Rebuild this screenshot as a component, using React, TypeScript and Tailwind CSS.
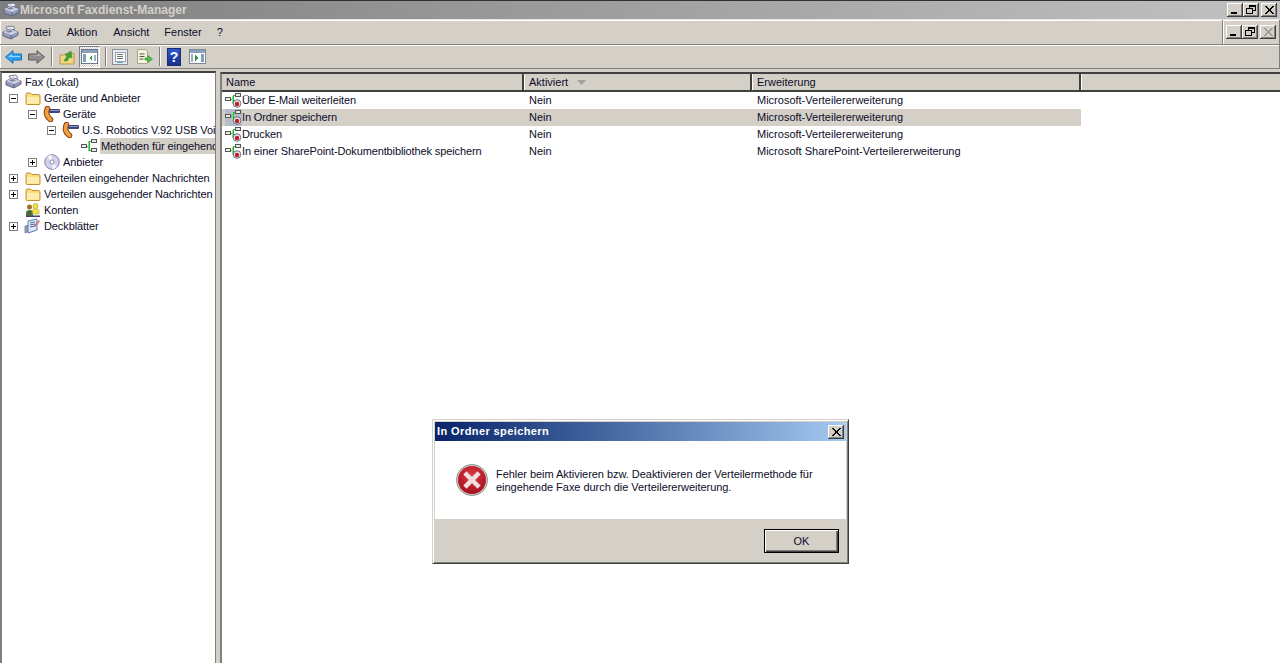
const bevel = "shadow-[inset_-1px_-1px_0_#404040,inset_1px_1px_0_#ffffff,inset_-2px_-2px_0_#808080]";

function CaptionBtn({ kind, disabled }: { kind: "min" | "restore" | "close"; disabled?: boolean }) {
  const c = disabled ? "#9a9890" : "#000";
  return (
    <div className={`w-[16px] h-[14px] bg-[#d4d0c8] flex items-center justify-center ${bevel}`}>
      <svg width="12" height="10" viewBox="0 0 12 10" shapeRendering="crispEdges">
        {kind === "min" && <rect x="2" y="7" width="6" height="2" fill={c} />}
        {kind === "restore" && (
          <path d="M4.5 3V.5h6v5H8M1.5 3.5h6v5h-6z M1 3.5h7M4 1h7" fill="none" stroke={c} />
        )}
        {kind === "close" && (
          <path d="M2 1l8 8M3 1l8 8M10 1l-8 8M11 1l-8 8" fill="none" stroke={c} strokeWidth="1" shapeRendering="auto" />
        )}
      </svg>
    </div>
  );
}

function FaxIcon() {
  return (
    <svg width="17" height="16" viewBox="0 0 17 16" className="shrink-0">
      <path d="M4 2l7-1 2 3-7 2z" fill="#eef0f6" stroke="#6d7290" strokeWidth=".9" />
      <path d="M1 7l7-3 8 3v3l-7 4-8-3z" fill="#9298b8" stroke="#5a5f80" strokeWidth=".9" />
      <path d="M1 7l8 3 7-3-8-3z" fill="#cdd0e2" />
      <path d="M9 10v4" stroke="#5a5f80" strokeWidth=".9" />
      <path d="M4 6.500l4-1.500 3 1.200-4 1.500z" fill="#7d82a0" />
    </svg>
  );
}

function Folder() {
  return (
    <svg width="16" height="15" viewBox="0 0 16 15" className="shrink-0">
      <path d="M1 3.500q0-1.500 1.500-1.500h3l1.500 1.500h6.500q1.500 0 1.500 1.500v7.500q0 1-1 1h-11.500q-1.500 0-1.500-1z" fill="#fbdc78" stroke="#bd8f35" strokeWidth="1" />
      <path d="M2 6h12v6.500h-12z" fill="#fdeeb0" />
    </svg>
  );
}

function PhoneIcon() {
  return (
    <svg width="17" height="16" viewBox="0 0 17 16" className="shrink-0">
      <path d="M4.500 2.500Q1.500 9 7.500 13.500" fill="none" stroke="#8a4310" strokeWidth="5.500" strokeLinecap="round" />
      <path d="M4.500 2.500Q1.500 9 7.500 13.500" fill="none" stroke="#f0a040" strokeWidth="3.500" strokeLinecap="round" />
      <rect x="6" y="3" width="11" height="4" rx="1" fill="#3f4478" />
      <rect x="7" y="4" width="9" height="1" fill="#9196c0" />
    </svg>
  );
}

function Branch({ overlay }: { overlay?: boolean }) {
  return (
    <svg width="17" height="16" viewBox="0 0 17 16" className="shrink-0" shapeRendering="crispEdges">
      <rect x="0.500" y={overlay ? 4.5 : 6.5} width="5" height="3" fill="#e8ece4" stroke="#555" />
      <path d={overlay ? "M6 6h2M8.500 2v9M8 2.500h2" : "M6 8h2M8.500 3v10M8 3.500h2M8 12.500h2"} stroke="#22b52e" fill="none" />
      <path d={overlay ? "M7.500 6v-3M7.500 6v5" : "M7.500 3v10"} stroke="#7fe085" fill="none" />
      <rect x="10.500" y={overlay ? 0.5 : 1.5} width="5" height="3" fill="#e8ece4" stroke="#555" />
      {!overlay && <rect x="10.500" y="10.500" width="5" height="3" fill="#e8ece4" stroke="#555" />}
      {overlay && (
        <g shapeRendering="auto">
          <circle cx="12" cy="10.500" r="3.800" fill="#e3e5ec" stroke="#5f6378" strokeWidth=".9" />
          <circle cx="12" cy="11" r="2.200" fill="#c41c26" />
        </g>
      )}
    </svg>
  );
}

function Disc() {
  return (
    <svg width="16" height="16" viewBox="0 0 16 16" className="shrink-0">
      <circle cx="8" cy="8" r="7.300" fill="#d2d2ee" stroke="#7c7c9c" strokeWidth=".9" />
      <path d="M8 8L3 3a7 7 0 0 1 5-2z" fill="#f4f4ff" />
      <path d="M8 8l5 5a7 7 0 0 1-5 2z" fill="#f0f0ff" />
      <circle cx="8" cy="8" r="2" fill="#fff" stroke="#7c7c9c" strokeWidth=".8" />
    </svg>
  );
}

function Accounts() {
  return (
    <svg width="16" height="16" viewBox="0 0 16 16" className="shrink-0">
      <circle cx="4.500" cy="5" r="2.500" fill="#a5702c" />
      <circle cx="10.500" cy="4" r="2.500" fill="#f3e04a" stroke="#a89a20" strokeWidth=".6" />
      <path d="M1 14v-3q0-3 3.500-3t3.500 3v3z" fill="#2f8a3c" />
      <path d="M7.500 12v-3.500q0-2 3-2t3.500 2v3.500z" fill="#efe04a" stroke="#a89a20" strokeWidth=".5" />
      <path d="M1 13.500h14v1.500h-14z" fill="#3f4478" />
      <path d="M3 9l3 4M6 9l-3 4" stroke="#b02828" strokeWidth="1" />
    </svg>
  );
}

function CoverIcon() {
  return (
    <svg width="17" height="16" viewBox="0 0 17 16" className="shrink-0">
      <path d="M1 8l4-1v6l-4 2z" fill="#9aa0b8" stroke="#666b85" strokeWidth=".7" />
      <path d="M4 3l9-2v11l-9 3z" fill="#dfe7f6" stroke="#4a6fb0" strokeWidth=".9" />
      <path d="M6 5l5-1M6 7l5-1M6 9l5-1" stroke="#3c5fa8" strokeWidth=".9" />
      <path d="M10 8l5-6 1 1-5 6z" fill="#e25a5a" />
    </svg>
  );
}

function Expander({ open }: { open?: boolean }) {
  return (
    <div className="w-[9px] h-[9px] border border-[#808080] bg-white relative shrink-0">
      <div className="absolute left-[1px] top-[3px] w-[5px] h-[1px] bg-black" />
      {!open && <div className="absolute left-[3px] top-[1px] w-[1px] h-[5px] bg-black" />}
    </div>
  );
}

function Sep() {
  return <div className="w-[2px] h-[19px] bg-[#808080] border-r border-white" />;
}

function ToolbarIcons() {
  return (
    <div className="flex items-center h-full pl-[5px]">
      <svg width="17" height="14" viewBox="0 0 17 14">
        <path d="M.5 7L8 .7v3.300h8.500v6H8v3.300z" fill="#2aa2f0" stroke="#1d6fb8" />
        <path d="M3 7l4-3v2h8v1H6z" fill="#93dcfc" />
      </svg>
      <svg width="17" height="14" viewBox="0 0 17 14" className="ml-[6px]">
        <path d="M16.500 7L9 .7v3.300H.5v6H9v3.300z" fill="#8f8f8f" stroke="#5c5c5c" />
        <path d="M2 5h8V3l3 3z" fill="#bcbcbc" />
      </svg>
      <div className="ml-[6px]"><Sep /></div>
      <svg width="16" height="16" viewBox="0 0 16 16" className="ml-[6px]">
        <path d="M1 6h4l1.500-1.500h8.500v10.500h-14z" fill="#f2d77f" stroke="#b8974a" />
        <path d="M5 12l3-5-2-1 6-4 1 7-2-1-3 4z" fill="#3fa53a" stroke="#2a7d2a" strokeWidth=".5" />
      </svg>
      <div className="ml-[4px] w-[21px] h-[22px] bg-[repeating-conic-gradient(#ffffff_0_25%,#d4d0c8_0_50%)] bg-[length:2px_2px] border border-t-[#808080] border-l-[#808080] border-r-white border-b-white flex items-center justify-center">
        <svg width="17" height="15" viewBox="0 0 17 15" shapeRendering="crispEdges">
          <rect x=".5" y=".5" width="16" height="14" fill="#fff" stroke="#6a7a92" />
          <rect x="1" y="1" width="15" height="3" fill="#8da0b8" />
          <rect x="2" y="5" width="3" height="8" fill="#7fa0bc" />
          <path d="M11 6v6L8 9z" fill="#2f9a3a" />
          <rect x="13" y="6" width="2" height="6" fill="#9ab0c4" />
        </svg>
      </div>
      <div className="ml-[5px]"><Sep /></div>
      <svg width="16" height="16" viewBox="0 0 16 16" className="ml-[5px]" shapeRendering="crispEdges">
        <rect x=".5" y=".5" width="15" height="15" fill="#e8ecf0" stroke="#8a9098" />
        <rect x="3" y="3" width="10" height="9" fill="#fff" stroke="#9aa0a8" />
        <path d="M5 5h6M5 7h6M5 9h6" stroke="#6a7480" />
        <rect x="5" y="13" width="6" height="1" fill="#48b0d0" />
      </svg>
      <svg width="17" height="16" viewBox="0 0 17 16" className="ml-[8px]">
        <path d="M1.500.5h8l2 2v12h-10z" fill="#f6f3dc" stroke="#a8a48c" />
        <path d="M3.500 5h5M3.500 7.500h5M3.500 10h4" stroke="#555" />
        <path d="M9 9h3V6.500l4.500 3.500-4.500 3.500V11H9z" fill="#4cc04c" stroke="#2a8a2a" strokeWidth=".6" />
      </svg>
      <div className="ml-[6px]"><Sep /></div>
      <div className="ml-[6px] w-[14px] h-[18px] bg-gradient-to-b from-[#2a56d0] to-[#1c2f8c] border border-[#1a2a70] flex items-center justify-center text-white text-[14px] font-bold leading-none">?</div>
      <svg width="17" height="15" viewBox="0 0 17 15" className="ml-[8px]" shapeRendering="crispEdges">
        <rect x=".5" y=".5" width="16" height="14" fill="#fff" stroke="#7a8a9a" />
        <rect x="1" y="1" width="15" height="3" fill="#8da0b8" />
        <rect x="2" y="5" width="2" height="8" fill="#9ab0c4" />
        <path d="M6 6v6l4-3z" fill="#2f9a3a" />
        <rect x="12" y="5" width="3" height="8" fill="#7fa0bc" />
      </svg>
    </div>
  );
}

function TreeRow({ indent, exp, noSlot, icon, children, selected }: { indent: number; exp?: "open" | "closed"; noSlot?: boolean; icon: React.ReactNode; children: React.ReactNode; selected?: boolean }) {
  return (
    <div className="h-[16px] flex items-center relative" style={{ paddingLeft: indent }}>
      {!noSlot && (
        <div className="w-[9px] mr-[6px] flex items-center shrink-0">{exp && <Expander open={exp === "open"} />}</div>
      )}
      <div className="w-[17px] flex items-center justify-center shrink-0">{icon}</div>
      <span className={`ml-[2px] px-[1px] whitespace-nowrap leading-[16px] tracking-[-0.1px] ${selected ? "bg-[#d4d0c8] w-[200px]" : ""}`}>{children}</span>
    </div>
  );
}

const rows = [
  { name: "Über E-Mail weiterleiten", status: "Nein", ext: "Microsoft-Verteilererweiterung" },
  { name: "In Ordner speichern", status: "Nein", ext: "Microsoft-Verteilererweiterung", selected: true },
  { name: "Drucken", status: "Nein", ext: "Microsoft-Verteilererweiterung" },
  { name: "In einer SharePoint-Dokumentbibliothek speichern", status: "Nein", ext: "Microsoft SharePoint-Verteilererweiterung" },
];

function HeaderCell({ w, children }: { w: string; children?: React.ReactNode }) {
  return (
    <div className={`${w} h-full flex items-center pl-[4px] pt-[1px] bg-[#d4d0c8] border-r-2 border-r-[#404040] shadow-[1px_0_0_#fff] mr-[1px] shrink-0`}>
      {children}
    </div>
  );
}

export default function App() {
  return (
    <div className="w-[1280px] h-[663px] overflow-hidden relative bg-[#d4d0c8] text-[11px] text-[#0c0c28] font-['Liberation_Sans',sans-serif] flex flex-col">
      {/* outer title bar */}
      <div className="h-[20px] shrink-0 border-t border-t-[#303030] border-b border-b-[#e8e6e0] bg-gradient-to-r from-[#7f7f7f] to-[#c2c2c2] flex items-center pl-[3px] pr-[3px]">
        <FaxIcon />
        <span className="font-bold text-[12px] text-[#d4d0c8]">Microsoft Faxdienst-Manager</span>
        <div className="ml-auto flex">
          <CaptionBtn kind="min" />
          <CaptionBtn kind="restore" />
          <div className="ml-[2px]"><CaptionBtn kind="close" /></div>
        </div>
      </div>

      {/* menu bar */}
      <div className="h-[25px] shrink-0 flex items-center border-b border-b-[#808080] shadow-[inset_1px_1px_0_#fff] border-r border-r-[#808080]">
        <div className="flex items-center h-full w-[1223px] border-r border-r-[#808080] pl-[2px] pt-[1px]">
          <FaxIcon />
          <span className="ml-[6px]">Datei</span>
          <span className="ml-[16px]">Aktion</span>
          <span className="ml-[16px]">Ansicht</span>
          <span className="ml-[15px]">Fenster</span>
          <span className="ml-[15px]">?</span>
        </div>
        <div className="flex pl-[2px] border-l border-l-white h-full items-center">
          <CaptionBtn kind="min" />
          <CaptionBtn kind="restore" />
          <div className="ml-[2px]"><CaptionBtn kind="close" disabled /></div>
        </div>
      </div>

      {/* toolbar */}
      <div className="h-[24px] shrink-0 border-b border-b-[#808080] border-r border-r-[#808080] shadow-[inset_1px_1px_0_#fff]">
        <ToolbarIcons />
      </div>

      {/* panels */}
      <div className="flex-1 flex mt-[2px] min-h-0">
        <div className="w-[216px] shrink-0 bg-white border-t-2 border-t-[#404040] border-l-2 border-l-[#808080] border-r border-r-[#808080] pt-[1px] overflow-hidden">
          <TreeRow indent={3} noSlot icon={<FaxIcon />}>Fax (Lokal)</TreeRow>
          <TreeRow indent={7} exp="open" icon={<Folder />}>Geräte und Anbieter</TreeRow>
          <TreeRow indent={26} exp="open" icon={<PhoneIcon />}>Geräte</TreeRow>
          <TreeRow indent={45} exp="open" icon={<PhoneIcon />}>U.S. Robotics V.92 USB Voice</TreeRow>
          <TreeRow indent={64} icon={<Branch />} selected>Methoden für eingehende Faxe</TreeRow>
          <TreeRow indent={26} exp="closed" icon={<Disc />}>Anbieter</TreeRow>
          <TreeRow indent={7} exp="closed" icon={<Folder />}>Verteilen eingehender Nachrichten</TreeRow>
          <TreeRow indent={7} exp="closed" icon={<Folder />}>Verteilen ausgehender Nachrichten</TreeRow>
          <TreeRow indent={7} icon={<Accounts />}>Konten</TreeRow>
          <TreeRow indent={7} exp="closed" icon={<CoverIcon />}>Deckblätter</TreeRow>
        </div>
        <div className="w-[4px] shrink-0" />
        <div className="flex-1 mt-[1px] bg-white border-t-2 border-t-[#404040] border-l-2 border-l-[#808080] min-w-0">
          <div className="h-[18px] flex border-b-2 border-b-[#404040] bg-[#d4d0c8]">
            <HeaderCell w="w-[302px]">Name</HeaderCell>
            <HeaderCell w="w-[227px]">
              Aktiviert
              <svg width="9" height="5" viewBox="0 0 9 5" className="ml-[9px]"><path d="M0 0h9L4.500 5z" fill="#a0a0a0" /></svg>
            </HeaderCell>
            <HeaderCell w="w-[328px]">Erweiterung</HeaderCell>
          </div>
          <div className="w-[859px]">
            {rows.map((r) => (
              <div key={r.name} className={`h-[17px] flex items-center ${r.selected ? "bg-[#d4d0c8]" : ""}`}>
                <div className="w-[303px] flex items-center pl-[3px] shrink-0">
                  <div className={`w-[17px] h-[17px] flex items-center ${r.selected ? "bg-[#b4bccc]" : ""}`}><Branch overlay /></div>
                  <span className="whitespace-nowrap tracking-[-0.12px]">{r.name}</span>
                </div>
                <div className="w-[228px] pl-[4px] shrink-0">{r.status}</div>
                <div className="pl-[4px] whitespace-nowrap">{r.ext}</div>
              </div>
            ))}
          </div>
        </div>
      </div>

      {/* error dialog */}
      <div className="absolute left-[432px] top-[419px] w-[417px] h-[145px] bg-[#d4d0c8] p-[2px] border border-t-[#d4d0c8] border-l-[#d4d0c8] border-r-[#404040] border-b-[#404040] shadow-[inset_1px_1px_0_#fff,inset_-1px_-1px_0_#808080] flex flex-col">
        <div className="h-[19px] shrink-0 bg-gradient-to-r from-[#0a246a] to-[#a6caf0] flex items-center pl-[2px] pr-[2px]">
          <span className="text-white font-bold text-[11px] tracking-[0.4px]">In Ordner speichern</span>
          <div className="ml-auto"><CaptionBtn kind="close" /></div>
        </div>
        <div className="h-[78px] shrink-0 bg-white flex items-center pl-[21px]">
          <svg width="32" height="32" viewBox="0 0 32 32" className="shrink-0">
            <defs>
              <radialGradient id="errorFill" cx="50%" cy="35%" r="70%">
                <stop offset="0%" stopColor="#e03a46" />
                <stop offset="100%" stopColor="#a00c18" />
              </radialGradient>
            </defs>
            <circle cx="16" cy="16" r="15.500" fill="#d8d8d8" stroke="#8a8a8a" />
            <circle cx="16" cy="16" r="14" fill="url(#errorFill)" />
            <path d="M10.500 10.500l11 11M21.500 10.500l-11 11" stroke="#f2e0e0" strokeWidth="4.500" strokeLinecap="square" />
          </svg>
          <p className="ml-[8px] mt-[1px] leading-[13px] w-[340px] tracking-[-0.04px]">
            Fehler beim Aktivieren bzw. Deaktivieren der Verteilermethode für eingehende Faxe durch die Verteilererweiterung.
          </p>
        </div>
        <div className="flex-1 flex items-start justify-end pt-[10px] pr-[7px]">
          <button className="w-[75px] h-[24px] border border-black bg-[#d4d0c8] shadow-[inset_1px_1px_0_#fff,inset_-1px_-1px_0_#404040,inset_-2px_-2px_0_#808080] text-[11px]">OK</button>
        </div>
      </div>
    </div>
  );
}
